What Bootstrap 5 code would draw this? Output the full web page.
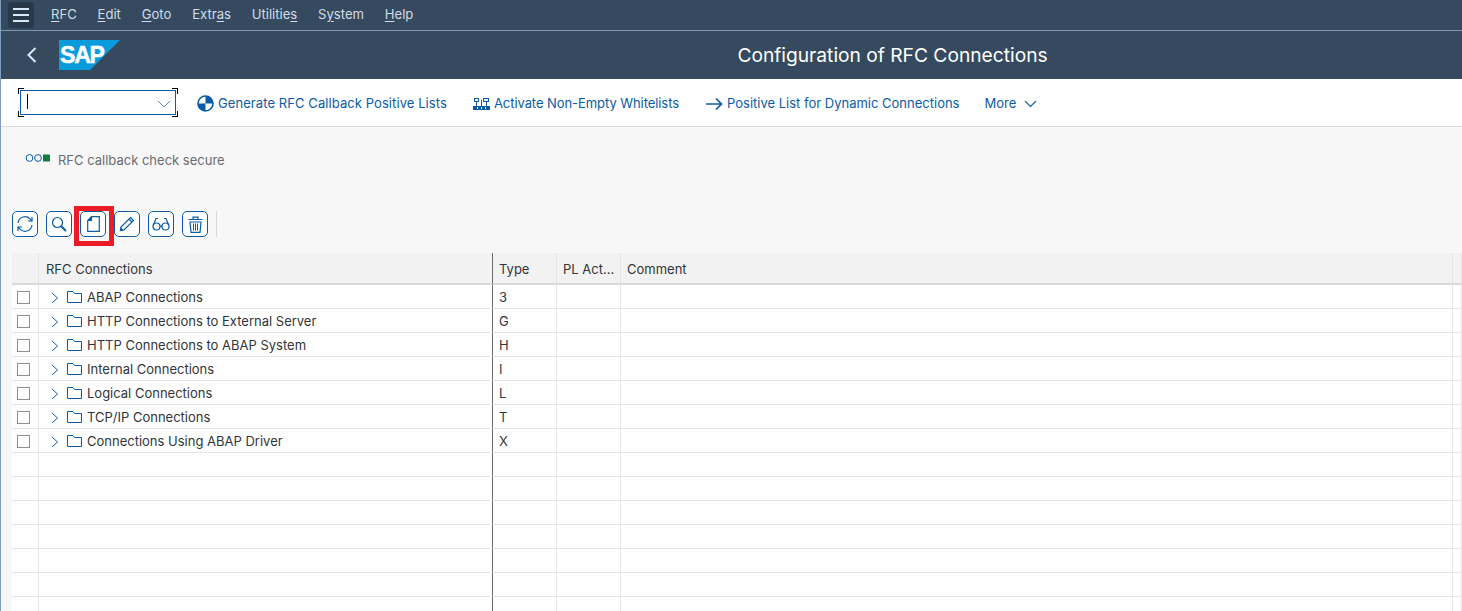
<!DOCTYPE html>
<html lang="en">
<head>
  <meta charset="UTF-8">
  <meta name="viewport" content="width=device-width, initial-scale=1.0">
  <title>Configuration of RFC Connections</title>
  <link href="https://cdn.jsdelivr.net/npm/bootstrap@5.3.0/dist/css/bootstrap.min.css" rel="stylesheet">
  <style>
    html, body { height: 611px; overflow: hidden; }
    body { background: #f7f7f7; font-family: Inter, "Liberation Sans", sans-serif; font-size: 13px; color: #32363a; border-left: 1px solid #7f9dbd; }
    svg { display: block; flex: none; }
    .menu-bar { height: 31px; background: #354a5f; border-bottom: 1px solid #7f95ab; }
    .menu-toggle { width: 26px; height: 26px; margin-left: 7px; margin-right: 17px; background: #29394a; border-radius: 3px; }
    .menu-toggle span { display: block; width: 16px; height: 2px; background: #d9e8f7; }
    .menu-item { color: #d1dce7; font-size: 13.1px; margin-right: 20.8px; }
    .menu-item u { text-underline-offset: 2px; }
    .title-bar { height: 48px; background: #354a5f; position: relative; }
    .back-icon { margin-left: 26px; margin-right: 22px; }
    .page-title { position: absolute; left: 0; right: 0; top: 0; line-height: 48px; text-align: center; padding-left: 322px; color: #fff; font-size: 19.2px; }
    .tool-bar { height: 48px; background: #fff; border-bottom: 1px solid #d9d9d9; color: #0a5ca8; padding: 2px 0 0 17px; }
    .combo-wrap { width: 160px; height: 29px; position: relative; margin: -2px 19px 0 0; }
    .combo-box { position: absolute; inset: 2px; border: 1px solid #0a5ca8; background: #fff; }
    .combo-caret { position: absolute; left: 9px; top: 6px; width: 1px; height: 15px; background: #000; }
    .combo-arrow { position: absolute; right: 7px; top: 12px; }
    .combo-corner { position: absolute; width: 6px; height: 6px; border: 0 solid #000; }
    .tool-item { margin-right: 26px; }
    .tool-link { color: #0a5ca8; font-size: 13px; white-space: nowrap; }
    .tool-wide { letter-spacing: .08px; }
    .tool-tight { letter-spacing: -.07px; }
    .tool-shift { margin-right: 27px; }
    .tool-last { margin-right: 25px; }
    .status-row { height: 84px; padding: 24px 0 0 24px; color: #6a6d70; }
    .status-row .leds { width: 25px; margin-right: 8px; }
    .icon-row { height: 42px; padding-left: 11px; position: relative; }
    .icon-btn { width: 26px; height: 26px; border: 1px solid #0a5ca8; border-radius: 5px; background: #fff; margin-right: 8px; color: #0a5ca8; }
    .red-mark { position: absolute; left: 73px; top: -5px; width: 40px; height: 40px; border: 5px solid #ec1c24; }
    .icon-sep { width: 1px; height: 26px; background: #d9d9d9; }
    .grid-wrap { margin-left: 11px; background: #fff; }
    .rfc-grid { table-layout: fixed; width: 1450px; margin: 0; border-collapse: separate; border-spacing: 0; --bs-table-bg: transparent; }
    .rfc-grid th, .rfc-grid td { height: 24px; padding: 2px 6px 0; border: 0; border-right: 1px solid #e5e5e5; border-bottom: 1px solid #e5e5e5; font-weight: 400; font-size: 13px; color: #32363a; vertical-align: middle; white-space: nowrap; box-shadow: none; }
    .rfc-grid thead th { height: 32px; padding-top: 3px; background: #f2f2f2; border-bottom: 2px solid #d9d9d9; }
    .rfc-grid .tree-col { border-right: 1px solid #6a6d70; padding-left: 7px; }
    .rfc-grid tbody .tree-col { padding-left: 12px; }
    .rfc-grid .sel-col { padding: 2px 0 0 5px; }
    .sel-box { width: 13px; height: 13px; border: 1px solid #89919a; background: #fff; display: block; }
    .tree-arrow { margin-right: 8px; }
    .tree-folder { margin: 0 5px 2px 0; }
  </style>
</head>
<body>
  <div class="menu-bar d-flex align-items-center">
    <div class="menu-toggle d-flex flex-column align-items-center justify-content-center gap-1">
      <span></span><span></span><span></span>
    </div>
    <span class="menu-item"><u>R</u>FC</span>
    <span class="menu-item"><u>E</u>dit</span>
    <span class="menu-item"><u>G</u>oto</span>
    <span class="menu-item">Extr<u>a</u>s</span>
    <span class="menu-item">Utilitie<u>s</u></span>
    <span class="menu-item">S<u>y</u>stem</span>
    <span class="menu-item"><u>H</u>elp</span>
  </div>

  <div class="title-bar d-flex align-items-center">
    <svg class="back-icon" width="10" height="16" viewBox="0 0 10 16"><path d="M8.5 1 1.5 8l7 7" fill="none" stroke="#d9e8f7" stroke-width="2"/></svg>
    <svg width="61" height="30" viewBox="0 0 61 30">
      <path d="M0 0H61L31 30H0Z" fill="#0a9bdc"/>
      <text x="1" y="23" font-family="Liberation Sans, sans-serif" font-weight="700" font-size="23" letter-spacing="-1.2" fill="#fff" stroke="#fff" stroke-width=".5">SAP</text>
    </svg>
    <div class="page-title">Configuration of RFC Connections</div>
  </div>

  <div class="tool-bar d-flex align-items-center">
    <div class="combo-wrap">
      <div class="combo-box"></div>
      <div class="combo-caret"></div>
      <svg class="combo-arrow" width="14" height="8" viewBox="0 0 14 8"><path d="M1 1l6 6 6-6" fill="none" stroke="#5b87b5" stroke-width="1"/></svg>
      <i class="combo-corner top-0 start-0" style="border-top-width:1px;border-left-width:1px"></i>
      <i class="combo-corner top-0 end-0" style="border-top-width:1px;border-right-width:1px"></i>
      <i class="combo-corner bottom-0 start-0" style="border-bottom-width:1px;border-left-width:1px"></i>
      <i class="combo-corner bottom-0 end-0" style="border-bottom-width:1px;border-right-width:1px"></i>
    </div>
    <div class="tool-item d-flex align-items-center gap-1">
      <svg width="17" height="17" viewBox="0 0 17 17"><circle cx="8.5" cy="8.5" r="7.5" fill="#fff" stroke="#0a5ca8" stroke-width="1.6"/><path d="M8.5 1A7.5 7.5 0 0 1 16 8.5H8.5ZM8.5 8.5V16A7.5 7.5 0 0 1 1 8.5Z" fill="#0a5ca8"/></svg>
      <span class="tool-link tool-wide">Generate RFC Callback Positive Lists</span>
    </div>
    <div class="tool-shift d-flex align-items-center gap-1">
      <svg width="17" height="14" viewBox="0 0 17 14" fill="#0a5ca8"><path d="M1 1h5v4H1zM2 2v2h3V2zM10 1h6v4h-6zM11 2v2h4V2z" fill-rule="evenodd"/><path d="M0 9h17v4H0z"/><path d="M3 5h1v4H3zM8 3h1v6H8zM13 5h1v4h-1z"/><path d="M4 10h1v2H4zM8 10h1v2H8zM12 10h1v2h-1z" fill="#fff"/></svg>
      <span class="tool-link tool-tight">Activate Non-Empty Whitelists</span>
    </div>
    <div class="tool-last d-flex align-items-center gap-1">
      <svg width="17" height="14" viewBox="0 0 17 14"><path d="M0 7h15.5M10 1.5 15.5 7 10 12.5" fill="none" stroke="#0a5ca8" stroke-width="1.7"/></svg>
      <span class="tool-link">Positive List for Dynamic Connections</span>
    </div>
    <div class="d-flex align-items-center gap-2">
      <span class="tool-link">More</span>
      <svg width="13" height="8" viewBox="0 0 13 8"><path d="M1 1l5.5 5.5L12 1" fill="none" stroke="#0a5ca8" stroke-width="1.1"/></svg>
    </div>
  </div>

  <div class="status-row d-flex align-items-start">
    <svg class="leds" width="25" height="14" viewBox="0 0 25 14"><circle cx="4.5" cy="7" r="3.4" fill="none" stroke="#0a5ca8"/><circle cx="13" cy="7" r="3.4" fill="none" stroke="#0a5ca8"/><rect x="18" y="3.5" width="7" height="7" fill="#107e3e"/></svg>
    <span>RFC callback check secure</span>
  </div>

  <div class="icon-row d-flex align-items-start">
    <div class="icon-btn d-flex align-items-center justify-content-center">
      <svg width="18" height="18" viewBox="0 0 18 18" fill="none" stroke="#0a5ca8" stroke-width="1.2"><path d="M2 8a7 7 0 0 1 12.5-3.5L16 6"/><path d="M16 2v4h-4"/><path d="M16 10A7 7 0 0 1 3.500 13.500L2 12"/><path d="M2 16v-4h4"/></svg>
    </div>
    <div class="icon-btn d-flex align-items-center justify-content-center">
      <svg width="16" height="16" viewBox="0 0 16 16" fill="none" stroke="#0a5ca8"><circle cx="6.500" cy="6.500" r="5" stroke-width="1.200"/><path d="m10.200 10.200 4.800 4.800" stroke-width="2"/></svg>
    </div>
    <div class="icon-btn d-flex align-items-center justify-content-center">
      <svg width="13" height="16" viewBox="0 0 13 16" fill="none" stroke="#0a5ca8" stroke-width="1.200"><path d="M4.500.7H12.300V15.300H.7V4.500Z"/><path d="M4.500.7V4.500H.7" fill="#0a5ca8"/></svg>
    </div>
    <div class="icon-btn d-flex align-items-center justify-content-center">
      <svg width="16" height="16" viewBox="0 0 16 16" fill="none" stroke="#0a5ca8" stroke-width="1.200"><path d="M11.500 1.500 14.500 4.500 5 14 1.500 14.500 2 11Z"/><path d="M10 3l3 3"/><path d="M1.500 14.500 2 12.500 3.500 14Z" fill="#0a5ca8"/></svg>
    </div>
    <div class="icon-btn d-flex align-items-center justify-content-center">
      <svg width="18" height="14" viewBox="0 0 18 14" fill="none" stroke="#0a5ca8" stroke-width="1.200"><circle cx="4.500" cy="9.500" r="3.500"/><circle cx="13.500" cy="9.500" r="3.500"/><path d="M8 9.500q1-1 2 0"/><path d="M1.200 8.500 4 1.500h2M16.800 8.500 14 1.500h-2"/></svg>
    </div>
    <div class="icon-btn d-flex align-items-center justify-content-center">
      <svg width="15" height="17" viewBox="0 0 15 17" fill="none" stroke="#0a5ca8" stroke-width="1.200"><path d="M.5 3.500h14M5 3.500V1.200h5V3.500"/><path d="M2 6h11l-1 10.300H3Z"/><path d="M5.500 7.500v7M7.500 7.500v7M9.500 7.500v7" stroke-width="1"/></svg>
    </div>
    <div class="icon-sep"></div>
    <div class="red-mark"></div>
  </div>

  <div class="grid-wrap">
    <table class="table rfc-grid">
      <colgroup><col style="width:27px"><col style="width:454px"><col style="width:64px"><col style="width:64px"><col style="width:832px"><col></colgroup>
      <thead>
        <tr><th></th><th class="tree-col">RFC Connections</th><th>Type</th><th>PL Act...</th><th>Comment</th><th></th></tr>
      </thead>
      <tbody id="gridBody"></tbody>
    </table>
  </div>

  <script>
    const folders = [
      ['ABAP Connections', '3'],
      ['HTTP Connections to External Server', 'G'],
      ['HTTP Connections to ABAP System', 'H'],
      ['Internal Connections', 'I'],
      ['Logical Connections', 'L'],
      ['TCP/IP Connections', 'T'],
      ['Connections Using ABAP Driver', 'X']
    ];
    const arrow = '<svg class="tree-arrow" width="8" height="12" viewBox="0 0 8 12"><path d="M1 1l5.500 5L1 11" fill="none" stroke="#0a5ca8"/></svg>';
    const folder = '<svg class="tree-folder" width="15" height="13" viewBox="0 0 15 13"><path d="M.5 12.500V1.500H6L7.500 3.500H14.500V12.500Z" fill="none" stroke="#0a5ca8"/></svg>';
    let html = '';
    folders.forEach(([name, type]) => {
      html += `<tr><td class="sel-col"><span class="sel-box"></span></td><td class="tree-col"><div class="d-flex align-items-center">${arrow}${folder}<span>${name}</span></div></td><td>${type}</td><td></td><td></td><td></td></tr>`;
    });
    for (let i = 0; i < 7; i++) {
      html += '<tr><td></td><td class="tree-col"></td><td></td><td></td><td></td><td></td></tr>';
    }
    document.getElementById('gridBody').innerHTML = html;
  </script>
</body>
</html>
